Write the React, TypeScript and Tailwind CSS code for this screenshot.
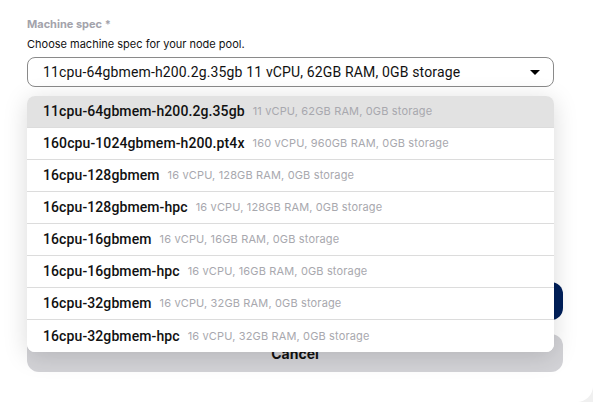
import { useState } from "react";

type Spec = { name: string; detail: string };

const specs: Spec[] = [
  { name: "11cpu-64gbmem-h200.2g.35gb", detail: "11 vCPU, 62GB RAM, 0GB storage" },
  { name: "160cpu-1024gbmem-h200.pt4x", detail: "160 vCPU, 960GB RAM, 0GB storage" },
  { name: "16cpu-128gbmem", detail: "16 vCPU, 128GB RAM, 0GB storage" },
  { name: "16cpu-128gbmem-hpc", detail: "16 vCPU, 128GB RAM, 0GB storage" },
  { name: "16cpu-16gbmem", detail: "16 vCPU, 16GB RAM, 0GB storage" },
  { name: "16cpu-16gbmem-hpc", detail: "16 vCPU, 16GB RAM, 0GB storage" },
  { name: "16cpu-32gbmem", detail: "16 vCPU, 32GB RAM, 0GB storage" },
  { name: "16cpu-32gbmem-hpc", detail: "16 vCPU, 32GB RAM, 0GB storage" },
];

export default function App() {
  const [selected, setSelected] = useState(0);
  const current = specs[selected];

  return (
    <div className="h-[402px] w-[593px] overflow-hidden bg-[#f0f0f0] font-['Inter',sans-serif]">
      <div className="relative flex h-full w-full flex-col rounded-br-[16px] bg-white px-[27px] pt-[17px]">
        <p className="text-[11px] font-bold leading-[14px] text-[#a3a3ab]">Machine spec *</p>
        <p className="mt-[6px] text-[11px] leading-[14px] text-[#111]">
          Choose machine spec for your node pool.
        </p>

        <button
          type="button"
          className="mt-[6px] flex h-[30px] w-[527px] items-center rounded-lg border border-[#8a8a8a] pl-[15px] pr-[13px] text-left font-['Roboto',sans-serif] text-[14px] tracking-[0.15px] text-[#111]"
        >
          <span className="flex-1 truncate">
            {current.name} {current.detail}
          </span>
          <svg width="10" height="5" viewBox="0 0 10 5" className="text-black">
            <path d="M0 0h10L5 5z" fill="currentColor" />
          </svg>
        </button>

        {/* footer actions, mostly covered by the open list */}
        <div className="mt-[195px] flex w-[536px] flex-col gap-[14px]">
          <button type="button" className="h-[38px] rounded-[12px] bg-[#00205b]" aria-label="Create" />
          <button type="button" className="h-[38px] rounded-[12px] bg-[#d3d3d7] text-[14px] font-bold text-[#111]">
            Cancel
          </button>
        </div>

        <ul className="absolute left-[27px] top-[96px] w-[527px] overflow-hidden rounded-lg bg-white shadow-[0_4px_24px_rgba(0,0,0,0.15)]">
          {specs.map((spec, index) => (
            <li
              key={spec.name}
              onClick={() => setSelected(index)}
              className={`flex h-8 items-center gap-2 px-4 ${
                index < specs.length - 1 ? "border-b border-[#dcdcdc]" : ""
              } ${index === selected ? "bg-[#e2e2e2]" : "bg-white"}`}
            >
              <span className="font-['Roboto',sans-serif] text-[14px] font-medium tracking-[0.1px] text-[#111]">
                {spec.name}
              </span>
              <span className="text-[11px] tracking-[0.15px] text-[#a8a8ae]">{spec.detail}</span>
            </li>
          ))}
        </ul>
      </div>
    </div>
  );
}
